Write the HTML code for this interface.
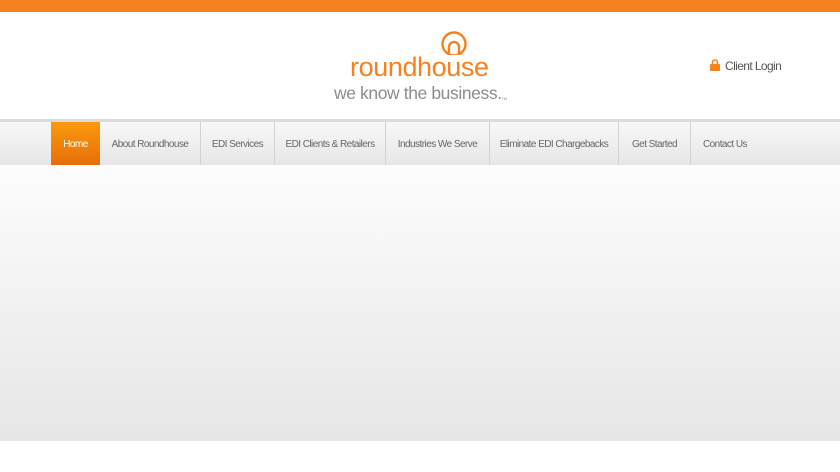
<!DOCTYPE html>
<html><head><style>
body{margin:0;width:840px;height:472px;overflow:hidden;background:#fff;font-family:"Liberation Sans",sans-serif;position:relative}
.top{position:absolute;left:0;top:0;width:840px;height:12px;background:#f5811f}
.logo1{position:absolute;left:350px;top:52px;font-size:27px;color:#f5811f;letter-spacing:-0.4px;line-height:30px}
.logo2{position:absolute;left:334px;top:82px;font-size:17.5px;color:#8c8c8c;letter-spacing:-0.4px;line-height:22px}
.tm{font-size:4px;vertical-align:top;position:relative;top:6px}
.login{position:absolute;left:710px;top:59px;font-size:12px;color:#555;letter-spacing:-0.6px}
.line{position:absolute;left:0;top:119px;width:840px;height:3px;background:#dcdcdc}
.nav{position:absolute;left:0;top:122px;width:840px;height:43px;background:linear-gradient(#f8f8f8,#e6e6e6)}
.nav a{position:absolute;top:0;height:43px;line-height:45px;font-size:10px;letter-spacing:-0.55px;color:#666;text-align:center;border-right:1px solid #d2d2d2;box-sizing:border-box}
.nav a.h{background:linear-gradient(#fb9a0e,#e66e0a);color:#fff;border:none}
.body{position:absolute;left:0;top:165px;width:840px;height:276px;background:linear-gradient(#fdfdfd,#e6e6e6)}
</style></head><body>
<div class="top"></div>
<svg style="position:absolute;left:440px;top:30px" width="30" height="28"><circle cx="14" cy="14" r="11.5" fill="none" stroke="#f5811f" stroke-width="2.4"/><path d="M9 25 V17 a5 5 0 0 1 10 0 V25" fill="none" stroke="#f5811f" stroke-width="2.4"/><rect x="0" y="25" width="30" height="3" fill="#fff"/></svg>
<div class="logo1">roundhouse</div>
<div class="logo2">we know the business.<span class="tm">TM</span></div>
<div class="login"><svg width="10" height="12" style="vertical-align:-1px;margin-right:5px"><path d="M2.5 5V3.5a2.5 2.5 0 0 1 5 0V5" fill="none" stroke="#f5811f" stroke-width="1.6"/><rect x="0" y="5" width="10" height="7" rx="1" fill="#f5811f"/></svg>Client Login</div>
<div class="line"></div>
<div class="nav">
<a class="h" style="left:51px;width:49px">Home</a>
<a style="left:100px;width:101px">About Roundhouse</a>
<a style="left:201px;width:74px">EDI Services</a>
<a style="left:275px;width:111px">EDI Clients &amp; Retailers</a>
<a style="left:386px;width:104px">Industries We Serve</a>
<a style="left:490px;width:129px">Eliminate EDI Chargebacks</a>
<a style="left:619px;width:72px">Get Started</a>
<a style="left:691px;width:112px;border:none;text-align:left;padding-left:12px">Contact Us</a>
</div>
<div class="body"></div>
</body></html>
